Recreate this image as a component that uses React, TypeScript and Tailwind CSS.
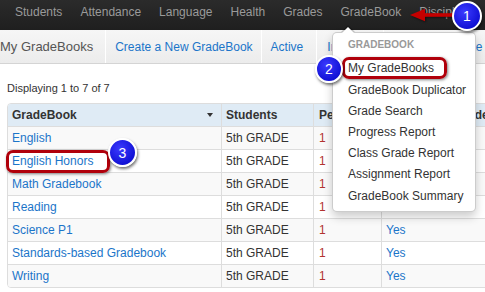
import React from "react";

function Badge({ n, left, top, size }: { n: string; left: number; top: number; size: number }) {
  return (
    <div
      className="absolute rounded-full border-2 border-white bg-[radial-gradient(circle_at_40%_35%,#3b3bff,#0000c4)] shadow-[1px_2px_3px_rgba(0,0,0,0.55)] flex items-center justify-center text-white text-[14px] leading-none"
      style={{ left, top, width: size, height: size }}
    >
      {n}
    </div>
  );
}

export default function App() {
  const nav = ["Students", "Attendance", "Language", "Health", "Grades", "GradeBook", "Discipline"];
  const rows = [
    "English",
    "English Honors",
    "Math Gradebook",
    "Reading",
    "Science P1",
    "Standards-based Gradebook",
    "Writing",
  ];
  const menu = [
    "My GradeBooks",
    "GradeBook Duplicator",
    "Grade Search",
    "Progress Report",
    "Class Grade Report",
    "Assignment Report",
    "GradeBook Summary",
  ];
  return (
    <div className="relative w-[485px] h-[292px] overflow-hidden bg-white font-['Liberation_Sans',Arial,sans-serif] text-[#333]">
      {/* top navbar */}
      <div className="h-[30px] bg-linear-to-b from-[#2b2b2b] to-[#1f1f1f] flex pl-[6px] text-[12px] text-[#9a9a9a] whitespace-nowrap">
        {nav.map((n) => (
          <div key={n} className="px-[9px] h-[24px] leading-[24px]">
            {n}
          </div>
        ))}
      </div>

      {/* sub nav */}
      <div className="h-[34px] border-b border-[#d4d4d4] bg-linear-to-b from-[#f6f6f6] to-[#ececec] flex items-stretch whitespace-nowrap text-[12px]">
        <div className="pr-[12px] flex items-center text-[13px] text-[#555]">My GradeBooks</div>
        <div className="w-px bg-[#dadada] border-r border-white box-content" />
        <div className="pl-[9px] pr-[8px] flex items-center text-[#1b75c9]">Create a New GradeBook</div>
        <div className="w-px bg-[#dadada] border-r border-white box-content" />
        <div className="pl-[9px] pr-[13px] flex items-center text-[#1b75c9]">Active</div>
        <div className="w-px bg-[#dadada] border-r border-white box-content" />
        <div className="pl-[10px] pr-[14px] flex items-center text-[#1b75c9]">Inactive</div>
        <div className="w-px bg-[#dadada] border-r border-white box-content" />
        <div className="pl-[13px] pr-[12px] flex items-center text-[#1b75c9]">Import Template</div>
      </div>

      {/* content */}
      <div className="pl-[7px]">
        <div className="mt-[16px] text-[11px] leading-[16px] text-[#333]">Displaying 1 to 7 of 7</div>
        <div className="mt-[7px] w-[620px] border border-[#dddddd] rounded-[4px] overflow-hidden text-[12px]">
          <div className="flex h-[22px] bg-[#dfebf5] font-bold">
            <div className="w-[213px] pl-[4px] pr-[8px] flex items-center justify-between">
              <span>GradeBook</span>
              <span className="w-0 h-0 border-x-[3.5px] border-x-transparent border-t-[4px] border-t-[#333]" />
            </div>
            <div className="w-[92px] border-l border-[#dddddd] pl-[4px] flex items-center">Students</div>
            <div className="w-[68px] border-l border-[#dddddd] pl-[5px] flex items-center">Periods</div>
            <div className="w-[110px] border-l border-[#dddddd] pl-[4px] flex items-center whitespace-nowrap">Cumulative Grade</div>
            <div className="flex-1 border-l border-[#dddddd]" />
          </div>
          {rows.map((r, i) => (
            <div
              key={r}
              className={`flex h-[23px] border-t border-[#dddddd] ${i % 2 === 0 ? "bg-[#f9f9f9]" : "bg-white"}`}
            >
              <div className="w-[213px] pl-[4px] flex items-center text-[#1b75c9] whitespace-nowrap">{r}</div>
              <div className="w-[92px] border-l border-[#dddddd] pl-[4px] flex items-center">5th GRADE</div>
              <div className="w-[68px] border-l border-[#dddddd] pl-[5px] flex items-center text-[#b2332f]">1</div>
              <div className="w-[110px] border-l border-[#dddddd] pl-[4px] flex items-center text-[#1b75c9]">Yes</div>
              <div className="flex-1 border-l border-[#dddddd]" />
            </div>
          ))}
        </div>
      </div>

      {/* dropdown menu */}
      <div className="absolute left-[332px] top-[32px] w-[144px] bg-white border border-[rgba(0,0,0,0.2)] rounded-[5px] shadow-[0_5px_10px_rgba(0,0,0,0.2)] pt-[5px] pb-[4px] whitespace-nowrap">
        <div className="absolute left-[8px] top-[-8px] w-0 h-0 border-x-[7px] border-x-transparent border-b-[7px] border-b-[rgba(0,0,0,0.2)]" />
        <div className="absolute left-[9px] top-[-6px] w-0 h-0 border-x-[6px] border-x-transparent border-b-[6px] border-b-white" />
        <div className="pl-[15px] text-[10px] font-bold text-[#999] leading-[14px] mb-[6.4px]">GRADEBOOK</div>
        {menu.map((m) => (
          <div key={m} className="pl-[15px] h-[21.2px] leading-[21.2px] text-[12px] text-[#333]">
            {m}
          </div>
        ))}
      </div>

      {/* red highlight rectangles */}
      <div className="absolute left-[342px] top-[57px] w-[105px] h-[22px] border-[3px] border-[#b0000b] rounded-[7px] shadow-[1px_1px_3px_rgba(0,0,0,0.5)]" />
      <div className="absolute left-[6px] top-[150px] w-[104px] h-[23px] border-[3px] border-[#b0000b] rounded-[7px] shadow-[1px_1px_3px_rgba(0,0,0,0.5)]" />

      {/* red arrow */}
      <svg
        className="absolute left-[408px] top-[5px] drop-shadow-[1px_1px_1px_rgba(0,0,0,0.55)]"
        width="50"
        height="20"
        viewBox="0 0 50 20"
      >
        <polygon points="2,10 17,3.8 17,16.2" fill="#c40000" />
        <rect x="15" y="8.2" width="35" height="3.6" fill="#c40000" />
      </svg>

      {/* numbered badges */}
      <Badge n="1" left={452} top={1} size={30} />
      <Badge n="2" left={315} top={55} size={28} />
      <Badge n="3" left={108} top={138} size={29} />
    </div>
  );
}
